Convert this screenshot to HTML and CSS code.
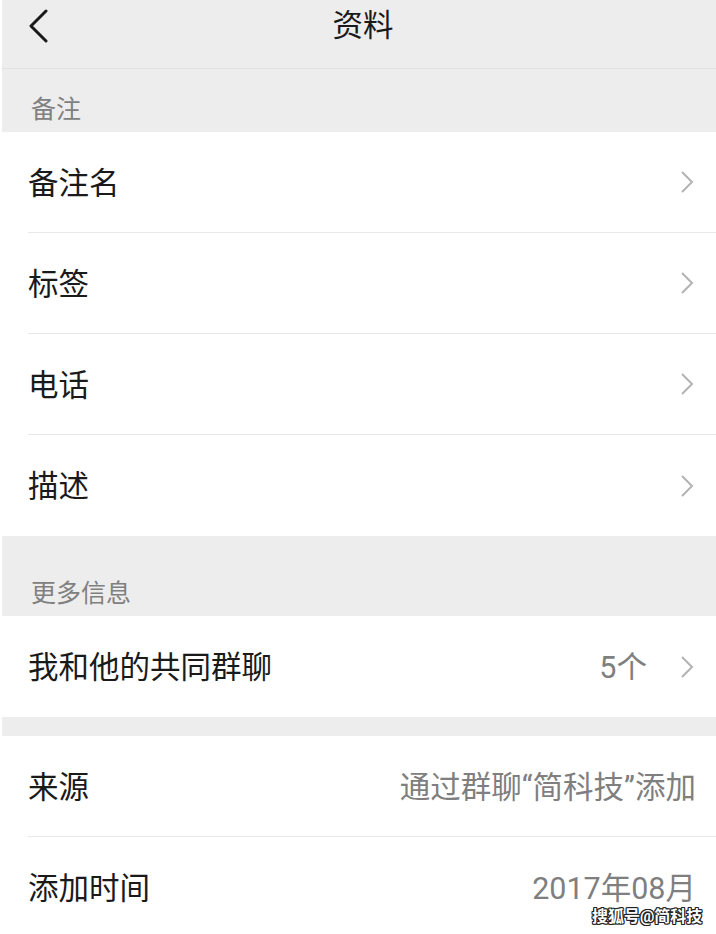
FILE: index.html
```html
<!DOCTYPE html>
<html lang="zh-CN">
<head>
<meta charset="utf-8">
<title>资料</title>
<link rel="stylesheet" href="styles.css">
</head>
<body>
<div class="screen">
  <header class="topbar">
    <svg class="back" width="20" height="34" viewBox="0 0 20 34"><polyline points="17,2 2,17 17,32" fill="none" stroke="#1a1a1a" stroke-width="3" stroke-linecap="round" stroke-linejoin="round"/></svg>
    <h1 class="title">资料</h1>
  </header>
  <div class="section-label first">备注</div>
  <div class="group">
    <div class="row"><span class="row-title">备注名</span><svg class="chev" width="14" height="24" viewBox="0 0 14 24"><polyline points="2,2 12,12 2,22" fill="none" stroke="#b3b3b3" stroke-width="2"/></svg></div>
    <div class="row"><span class="row-title">标签</span><svg class="chev" width="14" height="24" viewBox="0 0 14 24"><polyline points="2,2 12,12 2,22" fill="none" stroke="#b3b3b3" stroke-width="2"/></svg></div>
    <div class="row"><span class="row-title">电话</span><svg class="chev" width="14" height="24" viewBox="0 0 14 24"><polyline points="2,2 12,12 2,22" fill="none" stroke="#b3b3b3" stroke-width="2"/></svg></div>
    <div class="row"><span class="row-title">描述</span><svg class="chev" width="14" height="24" viewBox="0 0 14 24"><polyline points="2,2 12,12 2,22" fill="none" stroke="#b3b3b3" stroke-width="2"/></svg></div>
  </div>
  <div class="section-label more">更多信息</div>
  <div class="group">
    <div class="row"><span class="row-title">我和他的共同群聊</span><span class="value with-chev">5个</span><svg class="chev" width="14" height="24" viewBox="0 0 14 24"><polyline points="2,2 12,12 2,22" fill="none" stroke="#b3b3b3" stroke-width="2"/></svg></div>
  </div>
  <div class="spacer"></div>
  <div class="group">
    <div class="row plain"><span class="row-title">来源</span><span class="value">通过群聊“简科技”添加</span></div>
    <div class="row plain"><span class="row-title">添加时间</span><span class="value">2017年08月</span></div>
  </div>
  <div class="watermark">搜狐号@简科技</div>
</div>
</body>
</html>
```

FILE: styles.css
```css
html, body {
  margin: 0;
  padding: 0;
  background: #ffffff;
}
body {
  font-family: Roboto, "Noto Sans CJK SC", "Noto Sans", sans-serif;
  color: #1a1a1a;
  overflow: hidden;
}
.screen {
  position: relative;
  width: 716px;
  height: 934px;
  overflow: hidden;
}
.topbar {
  margin-left: 2px;
  background: #ededed;
  border-bottom: 1px solid #e2e2e2;
  display: flex;
  align-items: flex-start;
  padding-top: 9px;
  height: 59px;
  position: relative;
}
.back {
  margin-left: 27px;
}
.title {
  margin: 0;
  font-size: 30.5px;
  font-weight: 400;
  line-height: 36px;
  position: absolute;
  left: 0;
  right: 0;
  top: 8px;
  text-align: center;
  padding-left: 8px;
  color: #1a1a1a;
}
.section-label {
  margin-left: 2px;
  background: #ededed;
  display: flex;
  align-items: flex-end;
  box-sizing: border-box;
  padding-left: 29px;
  padding-bottom: 9px;
  font-size: 25px;
  line-height: 26px;
  color: #808080;
}
.section-label.first {
  height: 63px;
}
.section-label.more {
  height: 80px;
}
.group {
  padding-left: 28px;
  background: #ffffff;
}
.row {
  height: 101px;
  box-sizing: border-box;
  display: flex;
  align-items: center;
  padding-right: 22px;
  border-bottom: 1px solid #e8e8e8;
  padding-top: 3px;
}
.row:last-child {
  border-bottom: none;
}
.row.plain {
  padding-right: 20px;
}
.row-title {
  flex: 1;
  font-size: 30.5px;
  line-height: 36px;
  color: #1a1a1a;
}
.value {
  font-size: 30.5px;
  line-height: 36px;
  color: #7f7f7f;
}
.value.with-chev {
  margin-right: 33px;
}
.chev {
  display: block;
  margin-top: -3px;
}
.spacer {
  margin-left: 2px;
  height: 19px;
  background: #ededed;
}
.watermark {
  position: absolute;
  left: 592px;
  top: 905px;
  font-size: 16px;
  line-height: 24px;
  font-weight: 700;
  color: #ffffff;
  text-shadow: 1px 1px 0 #222, -1px -1px 0 #222, 1px -1px 0 #222, -1px 1px 0 #222, 0 1px 0 #222, 0 -1px 0 #222, 1px 0 0 #222, -1px 0 0 #222;
}
```
